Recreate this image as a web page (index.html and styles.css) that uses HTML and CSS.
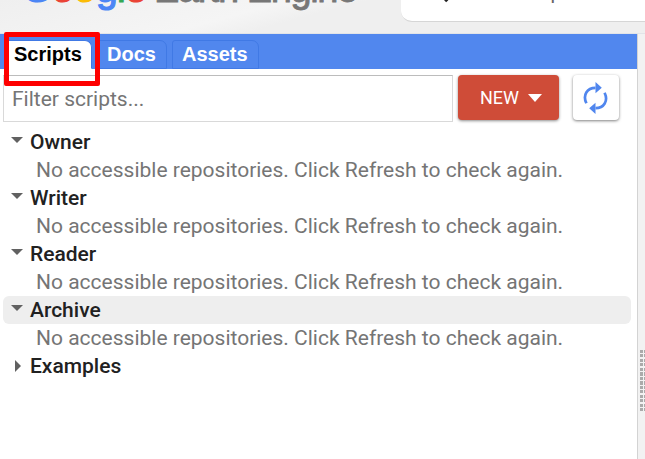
FILE: index.html
```html
<!DOCTYPE html>
<html lang="en">
<head>
<meta charset="utf-8">
<title>Google Earth Engine</title>
<link rel="stylesheet" href="styles.css">
</head>
<body>
<header class="header">
  <svg class="logo" width="401" height="33" viewBox="0 0 401 33">
    <g class="google">
      <text x="22" y="1.500" fill="#4c86f5" stroke="#4c86f5">G</text>
      <text x="52" y="1.500" fill="#ea4335" stroke="#ea4335">o</text>
      <text x="74" y="1.500" fill="#fbbc05" stroke="#fbbc05">o</text>
      <text x="96" y="1.500" fill="#4c86f5" stroke="#4c86f5">g</text>
      <text x="117" y="1.500" fill="#34a853" stroke="#34a853">l</text>
      <text x="125" y="1.500" fill="#ea4335" stroke="#ea4335">e</text>
    </g>
    <text class="product" x="154" y="1.500" textLength="204">Earth Engine</text>
  </svg>
  <div class="search">
    <svg class="search-icon" width="20" height="22" viewBox="0 0 20 22"><circle cx="7.500" cy="9" r="5.500"/><path d="M11.500 13l5.700 6.300"/></svg>
    <span class="search-text">Search places</span>
  </div>
</header>
<div class="workspace">
  <main class="panel">
    <nav class="tabs">
      <div class="tab active">Scripts</div>
      <div class="tab docs">Docs</div>
      <div class="tab">Assets</div>
    </nav>
    <div class="toolbar">
      <input class="filter" placeholder="Filter scripts..." aria-label="Filter scripts">
      <button class="new">NEW<span class="caret"></span></button>
      <button class="refresh" aria-label="Refresh">
        <svg width="25" height="34" viewBox="0 0 25 34">
          <g fill="none" stroke="#5086ee" stroke-width="2.700"><path d="M3.400 22.300C-.5 14 4 6.800 12.500 6.800"/><path d="M21.600 11.700C25.500 20 21 27.200 12.500 27.200"/></g>
          <path fill="#5086ee" d="M12.500 1l6.300 5.800-6.300 5.400zM12.500 33l-6.300-5.800 6.300-5.400z"/>
        </svg>
      </button>
    </div>
    <div class="tree">
      <div class="row"><span class="arrow open"></span>Owner</div>
      <div class="message">No accessible repositories. Click Refresh to check again.</div>
      <div class="row"><span class="arrow open"></span>Writer</div>
      <div class="message">No accessible repositories. Click Refresh to check again.</div>
      <div class="row"><span class="arrow open"></span>Reader</div>
      <div class="message">No accessible repositories. Click Refresh to check again.</div>
      <div class="row selected"><span class="arrow open"></span>Archive</div>
      <div class="message">No accessible repositories. Click Refresh to check again.</div>
      <div class="row"><span class="arrow"></span>Examples</div>
    </div>
  </main>
  <div class="divider"><div class="grip"></div></div>
</div>
<div class="highlight"></div>
</body>
</html>
```
FILE: styles.css
```css
* { box-sizing: border-box; }
body {
  margin: 0;
  width: 645px;
  height: 459px;
  overflow: hidden;
  background: #fff;
  font-family: Roboto, "Liberation Sans", sans-serif;
}
.header {
  display: flex;
  height: 34px;
  border-bottom: 1px solid #e2e4e8;
  background: linear-gradient(165deg, #efefef 0, #f5f5f5 38%, #efefef 48%);
}
.logo { flex: none; overflow: hidden; }
.google { font: 39px "Liberation Sans", sans-serif; stroke-width: 1.2; }
.product { font: 38px "Liberation Sans", sans-serif; fill: #777; stroke: #777; stroke-width: .8; }
.search {
  display: flex;
  flex: 1;
  height: 22px;
  overflow: hidden;
  background: #fff;
  border-bottom: 1px solid #d6d6d6;
  border-bottom-left-radius: 11px;
}
.search-icon {
  flex: none;
  margin: -18px 0 0 29px;
  fill: none;
  stroke: #222;
  stroke-width: 3;
}
.search-text {
  margin: -20px 0 0 34px;
  font-size: 20px;
  line-height: 24px;
  color: #666;
  white-space: nowrap;
}
.workspace { display: flex; height: 425px; }
.panel { width: 637px; }
.tabs {
  display: flex;
  gap: 5px;
  height: 35px;
  padding: 6px 0 0 5px;
  background: #5187ee;
}
.tab {
  height: 29px;
  padding: 0 10px 0 9px;
  border: 1px solid #4079e5;
  border-radius: 3px 7px 0 0;
  font: bold 20px/26px "Liberation Sans", Arial, sans-serif;
  color: #fff;
}
.tab.active { width: 87px; padding-left: 8px; padding-right: 0; border-bottom-color: #fff; background: #fff; color: #000; }
.tab.docs { width: 70px; }
.toolbar { display: flex; height: 53px; padding: 6px 0 0 3px; }
.filter {
  width: 450px;
  height: 47px;
  padding: 0 8px;
  border: 1px solid #d9d9d9;
  border-top-color: #bcbcbc;
  background: #fff;
  font: 21px Roboto, sans-serif;
}
.filter::placeholder { color: #757575; }
.new {
  display: flex;
  align-items: center;
  width: 101px;
  height: 45px;
  margin-left: 5px;
  padding: 0 0 1px 22px;
  border: 0;
  border-radius: 4px;
  background: #cf4c38;
  box-shadow: 0 1px 3px rgba(0, 0, 0, .45);
  color: #fff;
  font: 18px Roboto, sans-serif;
}
.caret {
  margin: 1px 0 0 9px;
  border: 7px solid transparent;
  border-top: 8px solid #fff;
  border-bottom: 0;
}
.refresh {
  display: grid;
  place-items: center;
  width: 46px;
  height: 45px;
  margin-left: 13.5px;
  padding: 0 1px 0 0;
  border: 0;
  border-radius: 4px;
  background: #fff;
  box-shadow: 0 1px 3px rgba(0, 0, 0, .5);
}
.tree { padding: 6px 6px 0 3px; }
.row {
  display: flex;
  height: 28px;
  border-radius: 6px;
  font-size: 21px;
  font-weight: 500;
  line-height: 28px;
  color: #212121;
}
.row.selected { background: #eee; }
.arrow {
  align-self: flex-start;
  flex: none;
  margin: 8px 9px 0 12px;
  border: 6px solid transparent;
  border-left: 6px solid #616161;
  border-right: 0;
}
.arrow.open {
  margin: 9px 7px 0 8px;
  border: 6px solid transparent;
  border-top: 6px solid #616161;
  border-bottom: 0;
}
.message {
  height: 28px;
  padding-left: 33px;
  font-size: 21px;
  line-height: 28px;
  color: #757575;
  white-space: nowrap;
}
.divider { width: 8px; padding: 316px 0 0 2px; border-left: 1px solid #d3d3d3; background: #f2f2f2; }
.grip {
  height: 63px;
  background: repeating-linear-gradient(to bottom, #aaa 0 3px, transparent 3px 4.500px);
  -webkit-mask: linear-gradient(to right, #000 0 3px, transparent 3px 4px, #000 4px);
  mask: linear-gradient(to right, #000 0 3px, transparent 3px 4px, #000 4px);
}
.highlight {
  position: absolute;
  left: 4px;
  top: 32px;
  width: 96px;
  height: 54px;
  border: 5px solid #fe0000;
  border-radius: 2px;
}
```
